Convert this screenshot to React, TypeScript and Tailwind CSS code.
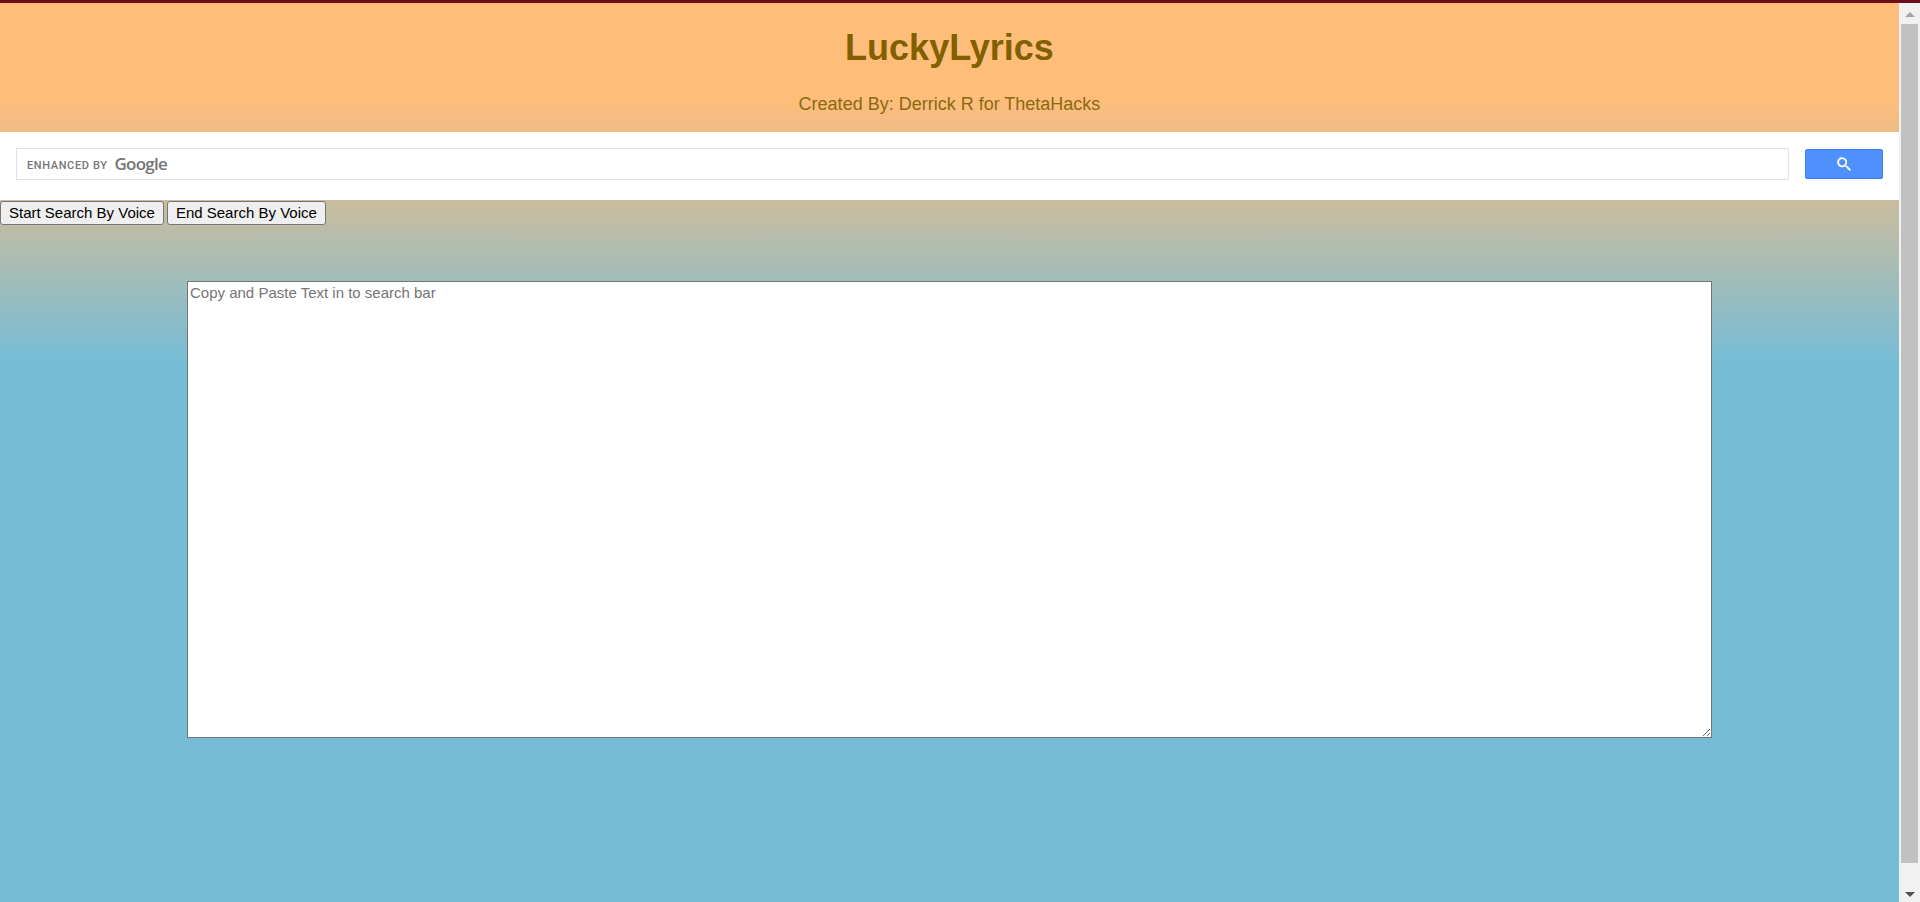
function SearchBar() {
  return (
    <div className="h-[68px] bg-white px-4 pt-4 flex items-start gap-4">
      <div className="flex-1 h-8 border border-[#dfe1e5] bg-white flex items-center pl-[10px]">
        <span className="font-['Roboto',sans-serif] text-[11px] font-medium leading-none text-[#757575] tracking-[0.62px] mt-[2px]">
          ENHANCED BY
        </span>
        <span className="ml-[7px] mb-[2px] font-['Open_Sans',sans-serif] text-[17px] font-semibold leading-none text-[#757575] tracking-[-0.75px]">
          Google
        </span>
      </div>
      <button className="mt-px w-[78px] h-[30px] bg-[#4d90fe] border border-[#3b7fee] rounded-[2px] flex items-center justify-center">
        <svg viewBox="0 0 13 13" className="w-[14px] h-[14px] fill-white">
          <path d="m4.8495 7.8226c0.82666 0 1.5262-0.29146 2.0985-0.87438 0.57232-0.58292 0.86378-1.2877 0.87438-2.1144 0.010599-0.82666-0.28086-1.5262-0.87438-2.0985-0.59352-0.57232-1.293-0.86378-2.0985-0.87438-0.8055-0.010599-1.5103 0.28086-2.1144 0.87438-0.60414 0.59352-0.8956 1.293-0.87438 2.0985 0.021197 0.8055 0.31266 1.5103 0.87438 2.1144 0.56172 0.60414 1.2665 0.8956 2.1144 0.87438zm4.4695 0.2115 3.681 3.6819-1.259 1.284-3.6817-3.7 0.0019784-0.69479-0.243-0.24296c-0.87705 0.76332-1.8876 1.1449-3.0317 1.1449-1.3234 0-2.4186-0.45586-3.2856-1.3676-0.86696-0.91172-1.3221-1.9867-1.3655-3.2249-0.043394-1.2382 0.41246-2.3349 1.3655-3.2856 0.95306-0.95066 2.0477-1.4041 3.2856-1.3605 1.2379 0.043627 2.3129 0.49797 3.2249 1.3655 0.91199 0.86799 1.3676 1.9629 1.3668 3.2856 0 1.1441-0.38127 2.1547-1.1442 3.0317l0.24296 0.243z" />
        </svg>
      </button>
    </div>
  );
}

function VoiceButton({ label }: { label: string }) {
  return (
    <button className="h-[24px] px-2 pb-[2px] bg-[#efefef] border border-[#767676] rounded-[3px] text-[15px] leading-none text-black">
      {label}
    </button>
  );
}

function Scrollbar() {
  return (
    <div className="w-[21px] shrink-0 bg-[#f1f1f1] flex flex-col items-center">
      <div className="h-[21px] w-full flex items-center justify-center pt-[1px]">
        <div className="w-0 h-0 border-x-[5px] border-x-transparent border-b-[5px] border-b-[#a3a3a3]" />
      </div>
      <div className="w-[17px] h-[839px] bg-[#c1c1c1]" />
      <div className="flex-1 w-full flex items-center justify-center pt-[23px]">
        <div className="w-0 h-0 border-x-[5px] border-x-transparent border-t-[5px] border-t-[#505050]" />
      </div>
    </div>
  );
}

export default function App() {
  return (
    <div className="h-[902px] overflow-hidden flex flex-col font-['Liberation_Sans',Arial,sans-serif]">
      <div className="h-[3px] bg-[#6b0f1a]" />
      <div className="flex-1 flex min-h-0">
        <div className="flex-1 min-w-0 bg-[linear-gradient(180deg,#ffbd7a_0px,#ffbd7a_95px,#76bcd6_360px,#76bcd6_100%)]">
          <div className="h-[129px] text-center pt-[24px]">
            <h1 className="text-[36px] leading-[41px] font-bold text-[#806000]">LuckyLyrics</h1>
            <p className="mt-[26px] text-[18px] leading-[21px] text-[#8a6a10]">
              Created By: Derrick R for ThetaHacks
            </p>
          </div>
          <SearchBar />
          <div className="flex gap-[3px] pt-px">
            <VoiceButton label="Start Search By Voice" />
            <VoiceButton label="End Search By Voice" />
          </div>
          <div className="mt-[56px] flex pl-[187px]">
            <textarea
              placeholder="Copy and Paste Text in to search bar"
              className="w-[1525px] h-[457px] bg-white border border-[#767676] px-0.5 pt-0.5 pb-0.5 text-[15px] leading-[17px] placeholder:text-[#757575] outline-none"
            />
          </div>
        </div>
        <Scrollbar />
      </div>
    </div>
  );
}
